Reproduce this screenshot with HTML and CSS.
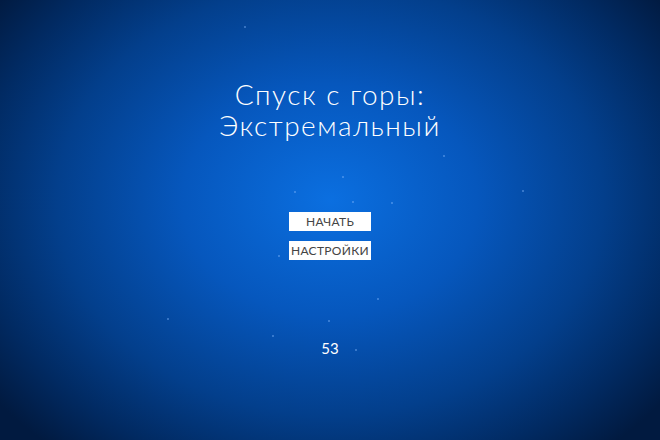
FILE: index.html
```html
<!DOCTYPE html>
<html lang="ru">
  <head>
    <meta charset="UTF-8" />
    <meta name="viewport" content="width=device-width, initial-scale=1.0" />
    <title>Спуск с горы: Экстремальный</title>
    <link rel="stylesheet" href="styles.css">
  </head>
  <body>
    <div class="screen">
      <!-- snow particles -->
      <span class="flake" style="left: 443px; top: 155px"></span>
      <span class="flake" style="left: 522px; top: 190px"></span>
      <span class="flake" style="left: 342px; top: 176px"></span>
      <span class="flake" style="left: 294px; top: 191px"></span>
      <span class="flake" style="left: 352px; top: 201px"></span>
      <span class="flake" style="left: 391px; top: 202px"></span>
      <span class="flake" style="left: 278px; top: 255px"></span>
      <span class="flake" style="left: 377px; top: 298px"></span>
      <span class="flake" style="left: 328px; top: 320px"></span>
      <span class="flake" style="left: 167px; top: 318px"></span>
      <span class="flake" style="left: 272px; top: 335px"></span>
      <span class="flake" style="left: 355px; top: 349px"></span>
      <span class="flake" style="left: 244px; top: 26px"></span>

      <div class="menu">
        <h1 class="title">Спуск с горы:<br />Экстремальный</h1>
        <div class="buttons">
          <button class="btn">НАЧАТЬ</button>
          <button class="btn">НАСТРОЙКИ</button>
        </div>
        <div class="score">53</div>
      </div>
    </div>
  </body>
</html>
```

FILE: styles.css
```css
html,
body {
  margin: 0;
  padding: 0;
}

body {
  font-family: Lato, "Open Sans", sans-serif;
}

.screen {
  position: relative;
  width: 660px;
  height: 440px;
  overflow: hidden;
  background: radial-gradient(
    ellipse 420px 330px at 330px 200px,
    #0b6fe0 0%,
    #0657bd 35%,
    #033f8c 65%,
    #012a62 85%,
    #011a40 100%
  );
  background-color: #011634;
}

.flake {
  position: absolute;
  width: 2px;
  height: 2px;
  border-radius: 50%;
  background-color: rgba(140, 190, 255, 0.5);
}

.menu {
  display: flex;
  flex-direction: column;
  align-items: center;
  padding-top: 79px;
}

.title {
  margin: 0;
  color: #fff;
  font-weight: 300;
  font-size: 28px;
  line-height: 31px;
  letter-spacing: 1.5px;
  text-align: center;
}

.buttons {
  display: flex;
  flex-direction: column;
  gap: 10px;
  margin-top: 71px;
}

.btn {
  width: 82px;
  height: 19px;
  padding: 0;
  border: 0;
  background-color: #fff;
  color: #444;
  font-family: inherit;
  font-size: 12px;
  letter-spacing: 0.3px;
  cursor: pointer;
}

.score {
  margin-top: 79px;
  color: #fff;
  font-size: 15px;
}
```
